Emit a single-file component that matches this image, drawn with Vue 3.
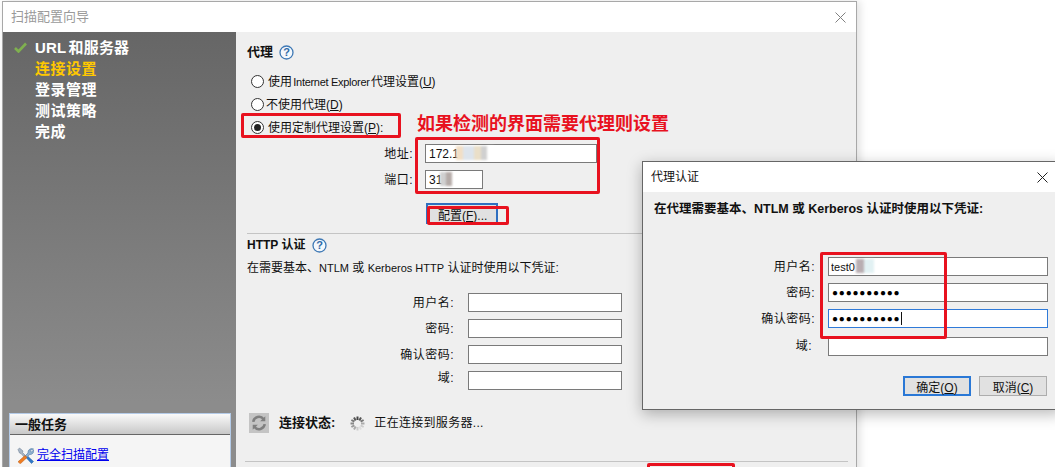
<script setup>
const steps = [
  { text: 'URL 和服务器', done: true },
  { text: '连接设置', active: true },
  { text: '登录管理' },
  { text: '测试策略' },
  { text: '完成' }
]
const httpFields = ['用户名:', '密码:', '确认密码:', '域:']
</script>

<template>
  <div class="desktop">
    <section class="window main-window">
      <header class="titlebar">
        <span class="title-text">扫描配置向导</span>
        <svg class="close" width="11" height="11" viewBox="0 0 11 11"><path d="M.5.5l10 10M10.500.5l-10 10" stroke="#808080" fill="none" /></svg>
      </header>
      <div class="wizard">
        <aside class="sidebar">
          <ul class="steps">
            <li v-for="s in steps" :key="s.text" :class="{ active: s.active, first: s.done }">
              <svg v-if="s.done" class="check" width="13" height="11" viewBox="0 0 13 11"><path d="M1 6l3.500 3.500L12 1.500" stroke="#7fb04f" stroke-width="2.600" fill="none" /></svg>
              {{ s.text }}
            </li>
          </ul>
          <div class="tasks">
            <div class="tasks-head">一般任务</div>
            <div class="tasks-body">
              <svg width="17" height="17" viewBox="0 0 17 17">
                <path d="M1 2.500L2.500 1 6 4l-.5 1.500L10 10 8.500 11.500 4 6.500 2.500 6z" fill="#a9b7c6" stroke="#60758c" stroke-width=".5" />
                <path d="M9 10.500l1.500-1.500 6 5.500-2 2z" fill="#2f79c8" stroke="#1f5a9c" stroke-width=".5" />
                <path d="M16.500 2a3.800 3.800 0 0 0-5.500 4L8 9l2 1.500 2.500-3a3.800 3.800 0 0 0 4.200-4.700L14.500 5 12.800 3.500z" fill="#8fb0d0" stroke="#4f7aa5" stroke-width=".6" />
                <path d="M1 14.800L8 8.500l2 2-6.700 6.300z" fill="#ef7d22" stroke="#b85a14" stroke-width=".5" />
              </svg>
              <a class="task-link">完全扫描配置</a>
            </div>
          </div>
        </aside>

        <main class="content">
          <h2 class="heading proxy-head">代理 <svg class="help" width="15" height="15" viewBox="0 0 15 15"><circle cx="7.500" cy="7.500" r="6.500" fill="#f4f8fc" stroke="#3f79b5" stroke-width="1.300" /><text x="7.500" y="11.300" text-anchor="middle" class="q">?</text></svg></h2>

          <div class="radios">
            <label class="radio"><i class="dot"></i>使用 <span class="latin tight">Internet Explorer</span> 代理设置(<u>U</u>)</label>
            <label class="radio close-text"><i class="dot"></i>不使用代理(<u>D</u>)</label>
            <label class="radio"><i class="dot on"></i>使用定制代理设置(<u>P</u>):</label>
          </div>

          <div class="proxy-form">
            <span>地址:</span>
            <div class="field wide">
              <input value="172.1" readonly />
              <i class="mosaic m1"></i>
            </div>
            <span>端口:</span>
            <div class="field short">
              <input value="31" readonly />
              <i class="mosaic m2"></i>
            </div>
          </div>

          <button class="config-btn">配置(<u>F</u>)...</button>

          <hr class="rule first" />

          <h3 class="heading http">HTTP 认证 <svg class="help" width="15" height="15" viewBox="0 0 15 15"><circle cx="7.500" cy="7.500" r="6.500" fill="#f4f8fc" stroke="#3f79b5" stroke-width="1.300" /><text x="7.500" y="11.300" text-anchor="middle" class="q">?</text></svg></h3>
          <p class="desc">在需要基本、<span class="latin">NTLM</span> 或 <span class="latin">Kerberos HTTP</span> 认证时使用以下凭证:</p>

          <div class="http-form">
            <template v-for="f in httpFields" :key="f">
              <span :class="{ raised: f === '域:' }">{{ f }}</span>
              <input />
            </template>
          </div>

          <div class="status">
            <span class="refresh">
              <svg width="16" height="16" viewBox="0 0 14 14"><path d="M2 6a5 5 0 0 1 9-2.300M12 8a5 5 0 0 1-9 2.300" stroke="#7f7f7f" stroke-width="2.200" fill="none" /><path d="M12.500 1v4.500H8zM1.500 13V8.500H6z" fill="#7f7f7f" /></svg>
            </span>
            <b class="status-label">连接状态:</b>
            <svg class="spinner" width="15" height="15" viewBox="0 0 15 15">
              <g stroke-width="2" stroke-linecap="butt">
                <path d="M7.500 .5v3.500" stroke="#444" />
                <path d="M11 1.400L9.300 4.400" stroke="#555" />
                <path d="M13.600 4L10.600 5.700" stroke="#777" />
                <path d="M14.500 7.500H11" stroke="#aaa" />
                <path d="M13.600 11L10.600 9.300" stroke="#ccc" />
                <path d="M11 13.600L9.300 10.600" stroke="#ddd" />
                <path d="M7.500 14.500V11" stroke="#ccc" />
                <path d="M4 13.600L5.700 10.600" stroke="#aaa" />
                <path d="M1.400 11L4.400 9.300" stroke="#999" />
                <path d="M.5 7.500H4" stroke="#888" />
                <path d="M1.400 4L4.400 5.700" stroke="#777" />
                <path d="M4 1.400L5.700 4.400" stroke="#555" />
              </g>
            </svg>
            <span class="status-text">正在连接到服务器...</span>
          </div>

          <hr class="rule last" />
        </main>
      </div>
    </section>

    <section class="window dialog">
      <header class="dialog-title">
        <span>代理认证</span>
        <svg width="13" height="13" viewBox="0 0 13 13"><path d="M1.500 1.500l10 10M11.500 1.500l-10 10" stroke="#222" fill="none" /></svg>
      </header>
      <div class="dialog-body">
        <p class="dialog-desc">在代理需要基本、NTLM 或 Kerberos 认证时使用以下凭证:</p>
        <div class="dialog-form">
          <span>用户名:</span>
          <div class="field">
            <input class="user" value="test0" readonly />
            <i class="mosaic m3"></i>
          </div>
          <span>密码:</span>
          <div class="field"><input class="pw" value="●●●●●●●●●●" readonly /></div>
          <span>确认密码:</span>
          <div class="field">
            <input class="pw focus" value="●●●●●●●●●●" readonly />
            <i class="caret"></i>
          </div>
          <span class="domain">域:</span>
          <div class="field domain-field"><input readonly /></div>
        </div>
        <div class="dialog-buttons">
          <button class="dlg-btn primary">确定(<u>O</u>)</button>
          <button class="dlg-btn">取消(<u>C</u>)</button>
        </div>
      </div>
    </section>

    <i class="mark mark-radio"></i>
    <i class="mark mark-fields"></i>
    <i class="mark mark-btn"></i>
    <i class="mark mark-creds"></i>
    <i class="mark mark-next"></i>
    <strong class="note">如果检测的界面需要代理则设置</strong>
  </div>
</template>

<style>
html, body { margin: 0; overflow: hidden; background: #fff; }
</style>

<style scoped>
.desktop {
  position: relative;
  width: 1055px;
  height: 467px;
  overflow: hidden;
  background: #fff;
  color: #111;
  font: 12px/18px "Liberation Sans", "Noto Sans CJK SC", sans-serif;
}
.window { position: absolute; box-sizing: border-box; }
.main-window {
  left: 2px;
  top: 1px;
  width: 855px;
  height: 490px;
  border: 1px solid #a8a8a8;
  border-top-width: 1px;
  background: #efefef;
  box-shadow: 3px 0 8px rgba(0, 0, 0, .12);
  display: flex;
  flex-direction: column;
}
.titlebar {
  height: 30px;
  flex: none;
  background: #fff;
  display: flex;
  align-items: center;
  justify-content: space-between;
  padding: 0 5px 0 8px;
}
.title-text { font-size: 13px; color: #9a9a9a; }
.close { margin-right: 5px; }
.wizard { flex: 1; display: flex; min-height: 0; }
.sidebar {
  width: 233px;
  flex: none;
  box-sizing: border-box;
  padding-top: 5px;
  background: linear-gradient(#666 0, #8c8c8c 85%);
  display: flex;
  flex-direction: column;
  height: 435px;
}
.steps {
  list-style: none;
  margin: 0;
  padding: 0 0 0 32px;
  font-size: 15px;
  line-height: 21px;
  font-weight: 700;
  letter-spacing: .5px;
  color: #fff;
}
.steps li { position: relative; }
.steps .first { word-spacing: -2px; letter-spacing: .2px; }
.steps .active { color: #ffc800; }
.check { position: absolute; left: -21px; top: 5px; }
.tasks {
  margin: auto 5px 0 6px;
  border: 1px solid #b4cbe8;
  border-bottom: 0;
  height: 54px;
  box-sizing: border-box;
  background: #f5f5f5;
}
.tasks-head {
  height: 20px;
  padding-left: 5px;
  font-size: 13px;
  line-height: 21px;
  font-weight: 700;
  background: linear-gradient(#fafafa, #c8c8c8);
  border-bottom: 1px solid #666;
}
.tasks-body { display: flex; align-items: center; gap: 3px; padding: 11px 0 0 7px; }
.task-link { color: #0000ee; font-size: 12px; text-decoration: underline; }

.content { flex: 1; min-width: 0; padding: 11px 8px 0 11px; background: #efefef; }
.heading {
  margin: 0;
  font-size: 13px;
  line-height: 18px;
  font-weight: 700;
  color: #111;
  display: flex;
  align-items: center;
  gap: 7px;
}
.proxy-head { gap: 6px; }
.help { flex: none; }
.q { font: 700 11px "Liberation Sans", sans-serif; fill: #2f6aa8; }
.latin { font-size: 11px; }
.latin.tight { letter-spacing: -.3px; margin: 0 -2px 0 -2px; }
.radios { margin-top: 9px; }
.radio { display: flex; align-items: center; height: 23px; padding-left: 4px; font-size: 12px; white-space: pre; }
.dot {
  width: 11px;
  height: 11px;
  margin-right: 4px;
  flex: none;
  border: 1px solid #333;
  border-radius: 50%;
  background: #fff;
  position: relative;
}
.close-text .dot { margin-right: 2px; }
.dot.on::after {
  content: "";
  position: absolute;
  inset: 2px;
  border-radius: 50%;
  background: #222;
}
.proxy-form {
  margin-top: 5px;
  display: grid;
  grid-template-columns: 166px 172px;
  column-gap: 12px;
  row-gap: 7px;
  align-items: center;
}
.proxy-form > span, .http-form > span, .dialog-form > span { text-align: right; letter-spacing: .5px; }
.field { position: relative; height: 19px; }
.field.short { width: 58px; }
input {
  display: block;
  box-sizing: border-box;
  width: 100%;
  height: 19px;
  margin: 0;
  padding: 0 3px;
  border: 1px solid #7a7a7a;
  border-radius: 0;
  outline: 0;
  background: #fff;
  color: #111;
  font: 12px "Liberation Sans", sans-serif;
}
.mosaic { position: absolute; filter: blur(1.2px); }
.m1 {
  left: 31px; top: 2px; width: 38px; height: 14px;
  background: linear-gradient(90deg, #f2dfc6 0 18%, #dde4ec 18% 48%, #eadfc8 48% 66%, #d0d0d0 66% 82%, #fff 82%);
}
.m2 { left: 15px; top: 2px; width: 12px; height: 14px; background: linear-gradient(90deg, #d0d0d0 50%, #b5aba8 50%); }
.m3 { left: 28px; top: 2px; width: 18px; height: 14px; background: linear-gradient(90deg, #b9aeb2 0 45%, #e2f1f3 45%); }
.config-btn {
  display: block;
  margin: 14px 0 0 179px;
  width: 72px;
  height: 21px;
  padding: 0;
  box-sizing: border-box;
  border: 0;
  border-top: 2px solid #2f6fc0;
  border-left: 2px solid #2f6fc0;
  border-right: 2px solid #2f6fc0;
  background: #e1e1e1;
  font: 12px "Liberation Sans", "Noto Sans CJK SC", sans-serif;
  color: #111;
  text-align: left;
  text-indent: 10px;
}
.rule { margin: 0; border: 0; height: 1px; background: #c4c4c4; }
.rule.first { margin-top: 9px; }
.http { margin-top: 2px; font-size: 12px; }
.desc { margin: 5px 0 0; font-size: 12px; }
.http-form {
  margin-top: 16px;
  display: grid;
  grid-template-columns: 207px 154px;
  column-gap: 14px;
  row-gap: 7px;
  align-items: center;
}
.http-form .raised { position: relative; top: -3px; }
.status { margin-top: 23px; height: 20px; display: flex; align-items: center; padding-left: 2px; }
.refresh {
  width: 20px;
  height: 20px;
  flex: none;
  background: #c4c4c4;
  display: flex;
  align-items: center;
  justify-content: center;
}
.status-label { margin-left: 10px; font-size: 13px; }
.spinner { margin-left: 15px; flex: none; }
.status-text { margin-left: 9px; font-size: 12px; letter-spacing: .3px; }
.rule.last { margin-top: 28px; margin-left: -2px; }

.dialog {
  left: 642px;
  top: 161px;
  width: 420px;
  height: 249px;
  border: 1px solid #666;
  background: #efefef;
  box-shadow: 0 4px 14px rgba(0, 0, 0, .28);
}
.dialog-title {
  height: 30px;
  background: #fff;
  display: flex;
  align-items: center;
  justify-content: space-between;
  padding: 0 12px 0 8px;
  box-sizing: border-box;
  width: 418px;
  font-size: 12px;
}
.dialog-body { padding: 0 0 0 11px; }
.dialog-desc { margin: 8px 0 0; font-size: 12.5px; font-weight: 700; line-height: 18px; }
.dialog-form {
  margin: 39px 0 0 0;
  display: grid;
  grid-template-columns: 161px 220px;
  column-gap: 13px;
  row-gap: 7px;
  align-items: center;
}
.dialog-form .domain { margin-right: 3px; }
.pw { color: #000; font-size: 10px; letter-spacing: .8px; padding-left: 3px; font-weight: 700; }
.user { font-size: 11px; padding-left: 2px; }
.focus { border-color: #2f7ad8; }
.caret { position: absolute; left: 73px; top: 3px; width: 1px; height: 13px; background: #111; }
.domain-field { margin-top: 2px; }
.dialog-buttons { display: flex; gap: 8px; margin: 20px 0 0 249px; }
.dlg-btn {
  width: 68px;
  height: 20px;
  padding: 0;
  box-sizing: border-box;
  border: 1px solid #adadad;
  background: #e1e1e1;
  font: 12px "Liberation Sans", "Noto Sans CJK SC", sans-serif;
  color: #111;
}
.dlg-btn.primary { border: 2px solid #2a78d6; }

.mark { position: absolute; box-sizing: border-box; border: 3px solid #e8121f; border-radius: 2px; }
.mark-radio { left: 241px; top: 113px; width: 160px; height: 25px; }
.mark-fields { left: 415px; top: 137px; width: 185px; height: 57px; }
.mark-btn { left: 427px; top: 206px; width: 82px; height: 19px; }
.mark-creds { left: 820px; top: 252px; width: 127px; height: 87px; }
.mark-next { left: 647px; top: 463px; width: 88px; height: 20px; }
.note {
  position: absolute;
  left: 417px;
  top: 112px;
  color: #e8121f;
  font-size: 18px;
  line-height: 24px;
  font-weight: 700;
  white-space: nowrap;
}
</style>
